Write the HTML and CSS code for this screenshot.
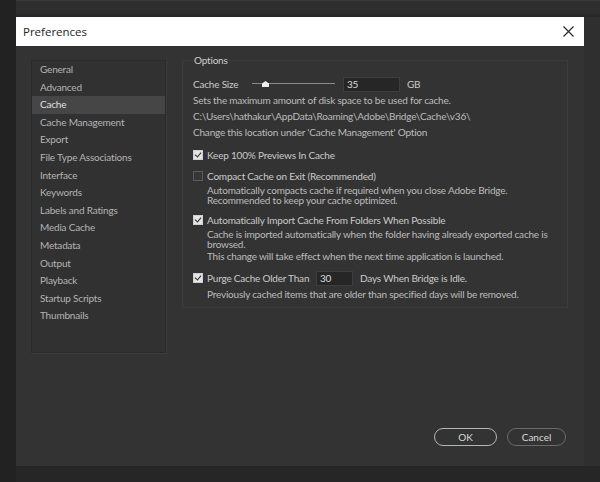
FILE: index.html
```html
<!DOCTYPE html>
<html>
<head>
<meta charset="utf-8">
<link rel="stylesheet" href="styles.css">
</head>
<body>
<div class="left-strip"></div>
<div class="app">
  <div class="topband"></div>
  <div class="mid">
    <div class="dialog">
      <div class="titlebar">
        <span class="title">Preferences</span>
        <svg class="close" width="11" height="11" viewBox="0 0 11 11"><path d="M0.5 0.5L10.5 10.5M10.5 0.5L0.5 10.5" stroke="#2a2a2a" stroke-width="1.2" fill="none"/></svg>
      </div>
      <div class="dbody">
        <div class="content">
          <ul class="nav">
            <li>General</li>
            <li>Advanced</li>
            <li class="sel">Cache</li>
            <li>Cache Management</li>
            <li>Export</li>
            <li>File Type Associations</li>
            <li>Interface</li>
            <li>Keywords</li>
            <li>Labels and Ratings</li>
            <li>Media Cache</li>
            <li>Metadata</li>
            <li>Output</li>
            <li>Playback</li>
            <li>Startup Scripts</li>
            <li>Thumbnails</li>
          </ul>
          <fieldset class="group">
            <legend>Options</legend>
            <div class="size-row">
              <span class="lbl size-lbl">Cache Size</span>
              <div class="slider"><div class="track"></div><svg class="thumb" width="7" height="6" viewBox="0 0 7 6"><path d="M3.5 0L7 2.5V6H0V2.5Z" fill="#eee"/></svg></div>
              <div class="field w56">35</div>
              <span class="lbl">GB</span>
            </div>
            <div class="info">
              <div>Sets the maximum amount of disk space to be used for cache.</div>
              <div>C:\Users\hathakur\AppData\Roaming\Adobe\Bridge\Cache\v36\</div>
              <div>Change this location under 'Cache Management' Option</div>
            </div>
            <div class="opt o1">
              <div class="chk-row"><span class="cb on"></span><span class="lbl">Keep 100% Previews In Cache</span></div>
            </div>
            <div class="opt o2">
              <div class="chk-row"><span class="cb"></span><span class="lbl">Compact Cache on Exit (Recommended)</span></div>
              <div class="desc">Automatically compacts cache if required when you close Adobe Bridge.<br>Recommended to keep your cache optimized.</div>
            </div>
            <div class="opt o3">
              <div class="chk-row"><span class="cb on"></span><span class="lbl">Automatically Import Cache From Folders When Possible</span></div>
              <div class="desc">Cache is imported automatically when the folder having already exported cache is<br>browsed.</div>
              <div class="desc d2">This change will take effect when the next time application is launched.</div>
            </div>
            <div class="opt o4">
              <div class="chk-row purge"><span class="cb on"></span><span class="lbl purge-lbl">Purge Cache Older Than</span><div class="field w36">30</div><span class="lbl">Days When Bridge is Idle.</span></div>
              <div class="desc d3">Previously cached items that are older than specified days will be removed.</div>
            </div>
          </fieldset>
        </div>
        <div class="buttons">
          <button class="btn ok">OK</button>
          <button class="btn cancel">Cancel</button>
        </div>
      </div>
    </div>
    <div class="right-strip"></div>
  </div>
  <div class="bottom"></div>
</div>
</body>
</html>
```

FILE: styles.css
```css
html, body {
  margin: 0;
  padding: 0;
  height: 100%;
}
body {
  display: flex;
  background: #232323;
  font-family: Lato, "Noto Sans", sans-serif;
  font-size: 10px;
  letter-spacing: -0.2px;
  color: #bcbcbc;
  overflow: hidden;
}
.left-strip {
  width: 16px;
  background: #222222;
}
.app {
  flex: 1;
  display: flex;
  flex-direction: column;
}
.topband {
  height: 13px;
  border-top: 1px solid #3a3a3a;
  border-bottom: 3px solid #282828;
  background: #2e2e2e;
}
.mid {
  display: flex;
}
.right-strip {
  flex: 1;
  background: #2f2f2f;
}
.bottom {
  flex: 1;
  background: #262626;
}
.dialog {
  width: 568px;
  height: 449px;
  display: flex;
  flex-direction: column;
  background: #333333;
}
.titlebar {
  height: 29px;
  background: #ffffff;
  display: flex;
  align-items: center;
  justify-content: space-between;
  padding: 0 10px 0 7px;
}
.title {
  font-family: "Open Sans", "Noto Sans", sans-serif;
  font-size: 11.5px;
  letter-spacing: 0;
  color: #1e1e1e;
}
.close {
  display: block;
}
.dbody {
  flex: 1;
  display: flex;
  flex-direction: column;
  padding: 14px 16px 20px 15px;
}
.content {
  display: flex;
  gap: 16px;
  align-items: flex-start;
}
.nav {
  list-style: none;
  margin: 0;
  padding: 0 0 27px 0;
  width: 133px;
  border: 1px solid #2a2a2a;
  box-shadow: 1px 1px 0 #3c3c3c;
  background: #313131;
}
.nav li {
  height: 17.6px;
  line-height: 17.6px;
  padding-left: 8px;
  color: #b4b4b4;
}
.nav li.sel {
  background: #464646;
  color: #e0e0e0;
}
.group {
  flex: 1;
  margin: -7px 0 0 0;
  padding: 0 10px 8px 10px;
  border: 1px solid #3c3c3c;
  min-width: 0;
  white-space: nowrap;
}
.group legend {
  padding: 0 1px;
  color: #cfcfcf;
  line-height: 14px;
}
.lbl {
  color: #cacaca;
}
.size-lbl {
  width: 59px;
}
.purge-lbl {
  width: 98px;
}
.size-row {
  margin-top: 9px;
  height: 16px;
  display: flex;
  align-items: center;
}
.slider {
  position: relative;
  width: 83px;
  height: 8px;
  margin-right: 8px;
}
.track {
  margin-top: 3px;
  height: 1px;
  background: #8a8a8a;
}
.thumb {
  position: absolute;
  left: 10px;
  top: 1px;
}
.field {
  line-height: 13px;
  background: #262626;
  border: 1px solid #3e3e3e;
  color: #dcdcdc;
  padding-left: 3px;
  box-sizing: border-box;
  height: 15px;
}
.w56 { width: 57px; margin-right: 7px; }
.w36 { width: 37px; margin: 0 7px 0 11px; }
.info {
  line-height: 16px;
}
.o1 { margin-top: 7px; }
.o2 { margin-top: 5px; }
.o3 { margin-top: 7px; }
.o4 { margin-top: 8px; }
.chk-row {
  height: 16px;
  display: flex;
  align-items: center;
}
.chk-row.purge { height: 18px; }
.cb {
  width: 10px;
  height: 10px;
  box-sizing: border-box;
  border: 1px solid #5a5a5a;
  background: #363636;
  margin-right: 4px;
  position: relative;
}
.cb.on {
  background: #e4e4e4;
  border-color: #cfcfcf;
}
.cb.on::after {
  content: "";
  position: absolute;
  left: 2px;
  top: 0px;
  width: 3px;
  height: 5px;
  border-right: 1.5px solid #2a2a2a;
  border-bottom: 1.5px solid #2a2a2a;
  transform: rotate(40deg);
}
.desc {
  margin-left: 14px;
  margin-top: 1px;
  line-height: 10px;
}
.d2 { margin-top: 2px; }
.d3 { margin-top: 2px; }
.buttons {
  margin-top: auto;
  display: flex;
  justify-content: flex-end;
  gap: 10px;
  padding-right: 2px;
}
.btn {
  height: 18px;
  border-radius: 9px;
  background: #333333;
  font-family: Lato, "Noto Sans", sans-serif;
  font-size: 10px;
  color: #dadada;
  padding: 0;
}
.ok {
  width: 63px;
  border: 1.5px solid #b5b5b5;
}
.cancel {
  width: 59px;
  border: 1.5px solid #6a6a6a;
}
```
